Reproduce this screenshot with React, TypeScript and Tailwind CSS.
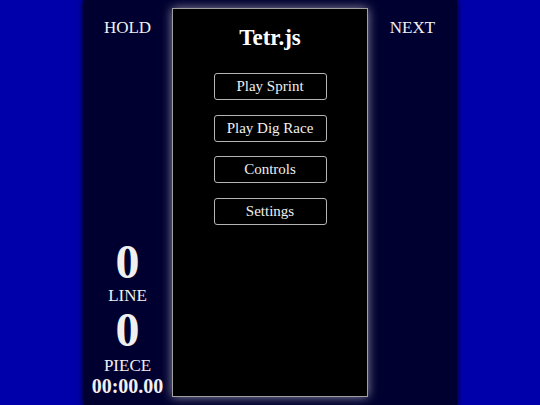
import React from "react"

const menu = ["Play Sprint", "Play Dig Race", "Controls", "Settings"]

export default function App() {
  return (
    <div
      className="flex h-[405px] w-[540px] justify-center overflow-hidden bg-[#0000aa] text-[#f0f0f0]"
      style={{ fontFamily: '"Liberation Serif", "Times New Roman", serif' }}
    >
      <div className="flex h-full w-[374px] bg-[#000030] shadow-[0_0_6px_#000]">
        {/* hold + stats */}
        <div className="flex w-[89px] flex-col items-center justify-between pb-[8px] pt-[17.5px]">
          <div className="text-[17px] leading-[20px]">HOLD</div>
          <div className="flex flex-col items-center">
            <div className="text-[48px] font-bold leading-[50px]">0</div>
            <div className="text-[17px] leading-[18px]">LINE</div>
            <div className="text-[48px] font-bold leading-[50px]">0</div>
            <div className="text-[17px] leading-[21px]">PIECE</div>
            <div className="text-[20px] font-bold leading-[21px]">00:00.00</div>
          </div>
        </div>

        {/* board */}
        <div className="my-[8px] flex w-[196px] flex-col items-center border border-[#a0a0a0] bg-black shadow-[0_0_10px_rgba(255,255,255,0.55)]">
          <h1 className="mt-[15px] text-[23px] font-bold leading-[27px] text-white">Tetr.js</h1>
          <div className="mt-[22px] flex flex-col gap-[14.5px]">
            {menu.map((m) => (
              <button
                key={m}
                className="flex h-[27px] w-[113px] items-center justify-center rounded-[3px] border border-[#b4b4b4] text-[15px] leading-none text-[#f0f0f0]"
              >
                {m}
              </button>
            ))}
          </div>
        </div>

        {/* next */}
        <div className="flex w-[89px] flex-col items-center pt-[17.5px]">
          <div className="text-[17px] leading-[20px]">NEXT</div>
        </div>
      </div>
    </div>
  )
}
